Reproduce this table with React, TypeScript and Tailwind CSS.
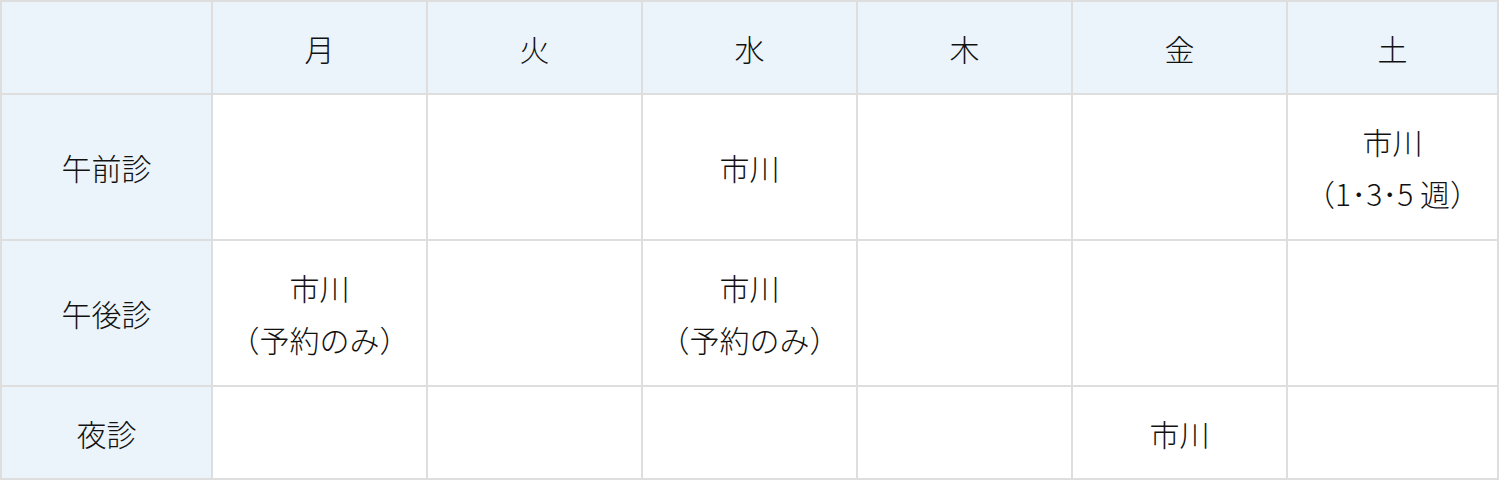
import { Fragment } from "react";

const days = ["月", "火", "水", "木", "金", "土"];

const rows: { label: string; cells: string[][] }[] = [
  {
    label: "午前診",
    cells: [[], [], ["市川"], [], [], ["市川", "（1･3･5 週）"]],
  },
  {
    label: "午後診",
    cells: [["市川", "（予約のみ）"], [], ["市川", "（予約のみ）"], [], [], []],
  },
  {
    label: "夜診",
    cells: [[], [], [], [], ["市川"], []],
  },
];

const Cell = ({ lines, head }: { lines: string[]; head?: boolean }) => (
  <div
    className={`flex flex-col items-center justify-center text-center leading-[52px] ${
      head ? "bg-[#ebf4fa]" : "bg-white"
    }`}
  >
    {lines.map((line, i) => (
      <span key={i} className="whitespace-nowrap">
        {line}
      </span>
    ))}
  </div>
);

const App = () => {
  return (
    <div
      className="w-[1499px] bg-[#dedede] p-[2px] grid gap-[2px] grid-cols-[209px_repeat(5,213px)_209px] grid-rows-[91px_144px_144px_91px] text-[30px] text-[#111111] font-light"
      style={{ fontFamily: '"Noto Sans CJK JP", "Noto Sans", sans-serif' }}
    >
      <Cell lines={[]} head />
      {days.map((d) => (
        <Cell key={d} lines={[d]} head />
      ))}
      {rows.map((row) => (
        <Fragment key={row.label}>
          <Cell lines={[row.label]} head />
          {row.cells.map((c, i) => (
            <Cell key={i} lines={c} />
          ))}
        </Fragment>
      ))}
    </div>
  );
};

export default App;
